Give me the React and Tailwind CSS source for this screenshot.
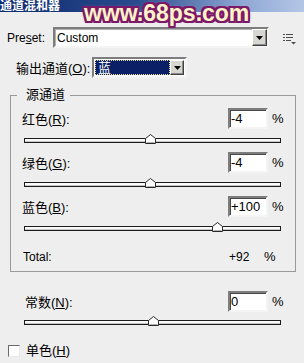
import React from 'react';

const SLIDER_W = 257;

const Thumb = ({ value }) => {
  const left = Math.round(((value + 200) / 400) * SLIDER_W) - 5;
  return (
    <svg className="absolute top-0" style={{ left }} width="11" height="10" viewBox="0 0 11 10">
      <polygon points="0.5,4.5 5.5,0.5 10.5,4.5 10.5,9.5 0.5,9.5" fill="#ffffff" stroke="#2a2a2a" />
      <line x1="1.5" y1="8.5" x2="9.5" y2="8.5" stroke="#b0b0b0" />
    </svg>
  );
};

const Slider = ({ value }) => (
  <div className="relative w-[257px] pt-[4px]">
    <div className="h-[5px] border border-[#1c1c1c] bg-[#fafafa] shadow-[inset_0_-1px_0_#c4c4c4]" />
    <Thumb value={value} />
  </div>
);

const Field = ({ value }) => (
  <div className="flex h-[21px] w-[40px] items-center border-2 border-t-[#7d7d7d] border-l-[#7d7d7d] border-r-[#f4f4f4] border-b-[#f4f4f4] bg-white pl-[1px] text-[13px] shadow-[inset_1px_1px_0_#4a4a4a]">
    {value}
  </div>
);

const Label = ({ text, letter }) => (
  <span className="text-[13px]">
    {text}(<span className="underline">{letter}</span>):
  </span>
);

const Channel = ({ text, letter, value }) => (
  <div className="mb-[9px]">
    <div className="flex h-[21px] items-center">
      <div className="w-[206px]">
        <Label text={text} letter={letter} />
      </div>
      <Field value={value > 0 ? '+' + value : value} />
      <span className="ml-[4px] text-[13px]">%</span>
    </div>
    <div className="ml-[2px] mt-[5px]">
      <Slider value={value} />
    </div>
  </div>
);

const DropButton = ({ className }) => (
  <div
    className={
      'flex items-center justify-center border border-t-[#ffffff] border-l-[#ffffff] border-r-[#404040] border-b-[#404040] bg-[#d8d6d0] shadow-[inset_-1px_-1px_0_#8a8a8a] ' +
      className
    }
  >
    <svg width="7" height="4" viewBox="0 0 7 4">
      <polygon points="0,0 7,0 3.5,4" fill="#000" />
    </svg>
  </div>
);

const MenuIcon = () => (
  <svg width="13" height="11" viewBox="0 0 13 11">
    <g fill="#4c4c4c">
      <rect x="0" y="0" width="2" height="1" />
      <rect x="3" y="0" width="7" height="1" />
      <rect x="0" y="3" width="2" height="1" />
      <rect x="3" y="3" width="7" height="1" />
      <rect x="0" y="6" width="2" height="1" />
      <rect x="3" y="6" width="5" height="1" />
      <polygon points="8,8 13,8 10.5,10.5" />
    </g>
  </svg>
);

const App = () => {
  return (
    <div className="relative h-[363px] w-[304px] overflow-hidden bg-[#eeeeee] font-['Liberation_Sans','Noto_Sans_CJK_SC',sans-serif] text-black">
      <div className="h-[12px] overflow-hidden bg-[linear-gradient(90deg,#0c2a6e_0%,#2a4c8e_45%,#8fa8d4_80%,#b4c6e6_100%)]">
        <div className="text-[12px] font-bold leading-[12px] text-white">通道混和器</div>
      </div>

      <div className="absolute left-[84px] top-[2px] text-[23px] font-bold leading-[23px] text-[#fff3c8] [text-shadow:2px_0_0_#7c1868,-2px_0_0_#7c1868,0_2px_0_#7c1868,0_-2px_0_#7c1868,2px_2px_0_#7c1868,-2px_-2px_0_#7c1868,2px_-2px_0_#7c1868,-2px_2px_0_#7c1868,0_0_4px_#c89ac0]">
        www.68ps.com
      </div>

      <div className="mt-[15px] flex h-[21px] items-center">
        <span className="w-[53px] pl-[7px] text-[12px]">
          Pre<span className="underline">s</span>et:
        </span>
        <div className="flex h-[21px] w-[216px] items-center border-2 border-t-[#7d7d7d] border-l-[#7d7d7d] border-r-[#f4f4f4] border-b-[#f4f4f4] bg-white shadow-[inset_1px_1px_0_#b0b0b0]">
          <span className="flex-1 pl-[2px] text-[12px]">Custom</span>
          <DropButton className="h-[17px] w-[15px]" />
        </div>
        <div className="ml-[14px] mt-[4px]">
          <MenuIcon />
        </div>
      </div>

      <div className="mt-[9px] flex h-[21px] items-center">
        <span className="w-[92px] pl-[16px]">
          <Label text="输出通道" letter="O" />
        </span>
        <div className="flex h-[21px] w-[95px] items-center border-2 border-t-[#7d7d7d] border-l-[#7d7d7d] border-r-[#f4f4f4] border-b-[#f4f4f4] bg-white p-[1px]">
          <div className="flex h-full flex-1 items-center border border-dotted border-[#e8e0a0] bg-[#0a1f66] pl-[2px] text-[13px] text-white">
            蓝
          </div>
          <DropButton className="h-full w-[14px]" />
        </div>
      </div>

      <fieldset className="ml-[10px] mt-[9px] w-[286px] border border-[#9a9a9a] pb-[6px] pl-[11px] pt-[5px]">
        <legend className="ml-[-5px] pl-[9px] pr-[5px] text-[13px] leading-[16px]">源通道</legend>
        <Channel text="红色" letter="R" value={-4} />
        <Channel text="绿色" letter="G" value={-4} />
        <Channel text="蓝色" letter="B" value={100} />
        <div className="mt-[18px] flex h-[16px] items-center text-[12px]">
          <span className="w-[207px] pl-[1px]">Total:</span>
          <span className="w-[35px]">+92</span>
          <span className="text-[13px]">%</span>
        </div>
      </fieldset>

      <div className="ml-[25px] mt-[19px]">
        <div className="flex h-[21px] items-center">
          <div className="w-[203px]">
            <Label text="常数" letter="N" />
          </div>
          <Field value="0" />
          <span className="ml-[4px] text-[13px]">%</span>
        </div>
        <div className="-ml-[1px] mt-[4px]">
          <Slider value={0} />
        </div>
      </div>

      <div className="ml-[8px] mt-[16px] flex items-center">
        <div className="h-[12px] w-[12px] border border-t-[#6a6a6a] border-l-[#6a6a6a] border-r-[#e8e8e8] border-b-[#e8e8e8] bg-white" />
        <span className="ml-[6px] text-[13px]">
          单色(<span className="underline">H</span>)
        </span>
      </div>
    </div>
  );
};

export default App;
